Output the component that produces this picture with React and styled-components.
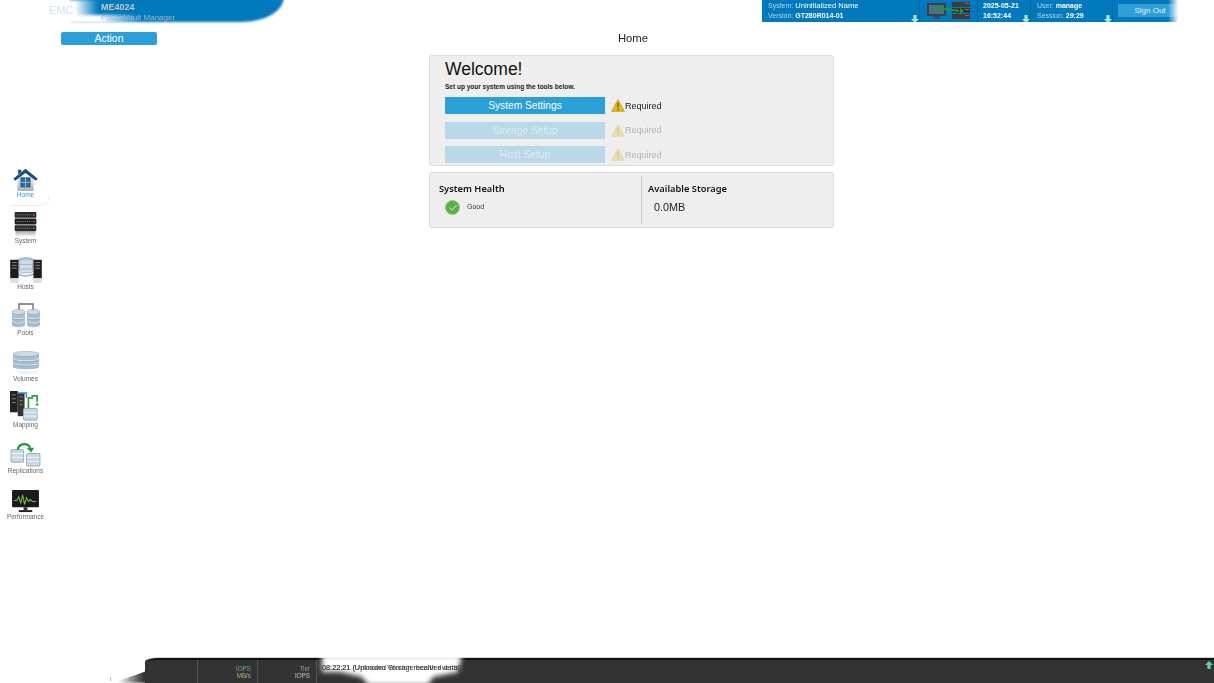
import React from "react";
import styled, { createGlobalStyle } from "styled-components";
import { Check } from "lucide-react";

const GlobalStyle = createGlobalStyle`
    html, body {
        margin: 0;
        padding: 0;
        height: 100%;
        background: #ffffff;
        font-family: "Liberation Sans", Arial, sans-serif;
        overflow: hidden;
    }
    #root {
        height: 100%;
    }
`;

const HomeIcon = () => (
    <svg width="25" height="23" viewBox="0 0 30 28">
        <defs>
            <linearGradient id="wallFade" x1="0" y1="0" x2="0" y2="1">
                <stop offset="0" stopColor="#eef0f2" />
                <stop offset="1" stopColor="#aab2b8" />
            </linearGradient>
        </defs>
        <path d="M5 11h20v17H5z" fill="url(#wallFade)" />
        <path d="M0 13L15 1l15 12-2.500 2.500L15 6 2.500 15.500z" fill="#17537f" />
        <path d="M6 2h4v3L6 8z" fill="#17537f" />
        <rect x="9.500" y="12" width="11" height="11" fill="#2f6f9f" stroke="#16476b" />
        <path d="M15 12v11M9.500 17.500h11" stroke="#a9cbe3" />
    </svg>
);

const SystemIcon = () => (
    <svg width="25" height="26" viewBox="0 0 30 31">
        <defs>
            <linearGradient id="serverFade" x1="0" y1="0" x2="0" y2="1">
                <stop offset="0" stopColor="#8c8c8c" />
                <stop offset="1" stopColor="#ffffff" />
            </linearGradient>
        </defs>
        <rect x="3" y="22" width="24" height="9" fill="url(#serverFade)" />
        <rect x="2" y="1" width="26" height="7" rx="1" fill="#2a2a2a" />
        <rect x="2" y="9" width="26" height="7" rx="1" fill="#1f1f1f" />
        <rect x="2" y="17" width="26" height="7" rx="1" fill="#2a2a2a" />
        <path d="M4 4.500h18M4 12.500h18M4 20.500h18" stroke="#8b8b8b" strokeDasharray="1.5 1" />
        <path d="M24 3.500h2v2h-2zM24 11.500h2v2h-2zM24 19.500h2v2h-2z" fill="#c7414f" />
    </svg>
);

const HostsIcon = () => (
    <svg width="32" height="26" viewBox="0 0 34 28">
        <path d="M7 4c6-4 14-4 20 0" fill="none" stroke="#a7b8d4" strokeWidth="2" />
        <path d="M8 18c5 3 13 3 18 0" fill="none" stroke="#a7b8d4" strokeWidth="2" />
        <rect x="10" y="3" width="14" height="14" rx="2" fill="#cfdde9" stroke="#9fb3c6" />
        <path d="M10 8h14M10 13h14" stroke="#9fb3c6" />
        <rect x="0" y="3" width="9" height="20" fill="#1d1d1d" />
        <rect x="25" y="3" width="9" height="20" fill="#1d1d1d" />
        <path d="M2 6h5M2 9h5M2 12h5M27 6h5M27 9h5M27 12h5" stroke="#8a8a8a" />
        <path d="M0 23h9v5H0zM25 23h9v5h-9z" fill="#dedede" />
    </svg>
);

const Disk = ({ x, y, w }) => (
    <>
        <path d={`M${x} ${y}v13c0 3 ${w} 3 ${w} 0v-13z`} fill="#a9bfd0" />
        <ellipse cx={x + w / 2} cy={y} rx={w / 2} ry="2.6" fill="#cddbe6" stroke="#8ea7ba" strokeWidth=".6" />
        <path d={`M${x} ${y + 4.5}c0 3 ${w} 3 ${w} 0M${x} ${y + 9}c0 3 ${w} 3 ${w} 0`} fill="none" stroke="#e6eef4" />
        <path d={`M${x} ${y + 5.4}c0 3 ${w} 3 ${w} 0M${x} ${y + 9.9}c0 3 ${w} 3 ${w} 0`} fill="none" stroke="#7f9db3" strokeWidth=".6" />
    </>
);

const PoolsIcon = () => (
    <svg width="30" height="26" viewBox="0 0 30 26">
        <path d="M8 8V1h14v7" fill="none" stroke="#6d6d6d" strokeWidth="1.4" />
        <Disk x={1} y={9} w={13} />
        <Disk x={16} y={9} w={13} />
    </svg>
);

const VolumesIcon = () => (
    <svg width="28" height="24" viewBox="0 0 28 24">
        <Disk x={1} y={3} w={26} />
        <path d="M3 18c5 3 19 3 24 0l-3 5H8z" fill="#eef2f5" />
    </svg>
);

const MappingIcon = () => (
    <svg width="31" height="30" viewBox="0 0 32 31">
        <rect x="0" y="0" width="8" height="22" fill="#222" />
        <rect x="8" y="2" width="7" height="24" fill="#333" />
        <path d="M2 4h4M2 8h4M2 12h4M10 6h3M10 10h3M10 14h3" stroke="#888" />
        <path d="M8 2h9v5" fill="none" stroke="#3f86d9" strokeWidth="1.5" />
        <path d="M19 18V7h4V5h5v6" fill="none" stroke="#2fa33b" strokeWidth="1.8" />
        <path d="M26 15h4l-2-3z" fill="#2fa33b" />
        <rect x="14" y="18" width="14" height="12" rx="1" fill="#c6d7e4" stroke="#92a9bc" />
        <path d="M14 22h14M14 26h14" stroke="#eef4f8" />
    </svg>
);

const ReplicationsIcon = () => (
    <svg width="31" height="24" viewBox="0 0 32 25">
        <rect x="1" y="7" width="13" height="13" rx="1" fill="#c9d8e4" stroke="#93a9ba" />
        <path d="M1 11h13M1 15h13" stroke="#eef4f8" />
        <rect x="17" y="11" width="14" height="13" rx="1" fill="#c9d8e4" stroke="#93a9ba" />
        <path d="M17 15h14M17 19h14" stroke="#eef4f8" />
        <path d="M8 7C9 0 18-1 21 5" fill="none" stroke="#249a3c" strokeWidth="2.4" />
        <path d="M17 5h8l-3 5z" fill="#249a3c" />
    </svg>
);

const PerformanceIcon = () => (
    <svg width="29" height="24" viewBox="0 0 30 25">
        <rect x="1" y="1" width="28" height="18" rx="1" fill="#1b1b1b" />
        <path d="M3 12h3l2-4 2 7 2-9 2 10 2-7 2 4 2-2 2 2h4" fill="none" stroke="#79b94a" strokeWidth="1.1" />
        <rect x="13" y="19" width="4" height="3" fill="#333" />
        <rect x="8" y="22" width="14" height="2" fill="#222" />
    </svg>
);

const WarningIcon = ({ faded }) => (
    <WarningSvg $faded={faded} width="14" height="13" viewBox="0 0 14 13">
        <path d="M7 .6L13.600 12.400H.4z" fill="#e3bb18" stroke="#b8940f" strokeWidth=".6" strokeLinejoin="round" />
        <path d="M6.400 4h1.200l-.2 5H6.600zM6.400 10h1.200v1.200H6.400z" fill="#4a3c05" />
    </WarningSvg>
);

const DataHostIcon = () => (
    <svg width="44" height="20" viewBox="0 0 44 20">
        <rect x="0" y="2" width="19" height="13" fill="#38424a" />
        <rect x="2" y="4" width="15" height="9" fill="#4e6f84" />
        <rect x="6" y="15" width="7" height="3" fill="#29536f" />
        <rect x="25" y="1" width="18" height="5" fill="#3c3c3c" />
        <rect x="25" y="7" width="18" height="5" fill="#333" />
        <rect x="25" y="13" width="18" height="5" fill="#3c3c3c" />
        <path d="M38 2.500h4M38 8.500h4M38 14.500h4" stroke="#d34a4a" />
        <path d="M12 7l20 3" stroke="#1c9a3a" strokeWidth="1.8" />
        <path d="M12 4v6l-4-3zM33 7v6l4-3z" fill="#1c9a3a" />
    </svg>
);

const BlockArrow = ({ up }) => (
    <svg width="8" height="8" viewBox="0 0 8 8">
        <path d={up ? "M4 0l4 4H5.600v4H2.400V4H0z" : "M4 8L0 4h2.400V0h3.200v4H8z"} fill={up ? "#5fd0b4" : "#a8e6d2"} />
    </svg>
);

const navItems = [
    { label: "Home", icon: <HomeIcon />, active: true },
    { label: "System", icon: <SystemIcon /> },
    { label: "Hosts", icon: <HostsIcon /> },
    { label: "Pools", icon: <PoolsIcon /> },
    { label: "Volumes", icon: <VolumesIcon /> },
    { label: "Mapping", icon: <MappingIcon /> },
    { label: "Replications", icon: <ReplicationsIcon /> },
    { label: "Performance", icon: <PerformanceIcon /> },
];

const setupSteps = [
    { label: "System Settings" },
    { label: "Storage Setup", disabled: true },
    { label: "Host Setup", disabled: true },
];

export default function App() {
    return (
        <>
            <GlobalStyle />
            <Page>
                <Header>
                    <Brand>
                        <BrandFade>EMC</BrandFade>
                        <BrandText>
                            <strong>ME4024</strong>
                            <span>PowerVault Manager</span>
                        </BrandText>
                    </Brand>
                    <Status>
                        <StatusCell $width={158}>
                            <p><Label>System:</Label> <Value $large>Uninitialized Name</Value></p>
                            <p><Label>Version:</Label> <Value>GT280R014-01</Value></p>
                            <Drop><BlockArrow /></Drop>
                        </StatusCell>
                        <StatusIcon><DataHostIcon /></StatusIcon>
                        <StatusCell $width={53} $pad={5}>
                            <p><Value>2025-05-21</Value></p>
                            <p><Value>16:52:44</Value></p>
                            <Drop><BlockArrow /></Drop>
                        </StatusCell>
                        <StatusCell $width={82}>
                            <p><Label>User:</Label> <Value>manage</Value></p>
                            <p><Label>Session:</Label> <Value>29:29</Value></p>
                            <Drop><BlockArrow /></Drop>
                        </StatusCell>
                        <SignOut>Sign Out</SignOut>
                    </Status>
                </Header>
                <Main>
                    <Sidebar>
                        {navItems.map((item) => (
                            <NavItem key={item.label} $active={item.active}>
                                <NavIcon>{item.icon}</NavIcon>
                                <NavLabel $active={item.active}>{item.label}</NavLabel>
                            </NavItem>
                        ))}
                    </Sidebar>
                    <Content>
                        <TopRow>
                            <ActionButton>Action</ActionButton>
                            <Title>Home</Title>
                        </TopRow>
                        <Card>
                            <Welcome>Welcome!</Welcome>
                            <Intro>Set up your system using the tools below.</Intro>
                            <Steps>
                                {setupSteps.map((step) => (
                                    <Step key={step.label}>
                                        <StepButton $disabled={step.disabled}>{step.label}</StepButton>
                                        <WarningIcon faded={step.disabled} />
                                        <Required $disabled={step.disabled}>Required</Required>
                                    </Step>
                                ))}
                            </Steps>
                        </Card>
                        <SummaryCard>
                            <Health>
                                <SummaryTitle>System Health</SummaryTitle>
                                <HealthRow>
                                    <GoodBadge><Check size={10} color="#ffffff" strokeWidth={2} /></GoodBadge>
                                    <GoodText>Good</GoodText>
                                </HealthRow>
                            </Health>
                            <StorageCell>
                                <SummaryTitle>Available Storage</SummaryTitle>
                                <StorageValue>0.0MB</StorageValue>
                            </StorageCell>
                        </SummaryCard>
                    </Content>
                </Main>
                <Footer>
                    <FooterTicks>I&nbsp;&nbsp;&nbsp;&nbsp;&nbsp;&nbsp;&nbsp;&nbsp;&nbsp;&nbsp;&nbsp;b</FooterTicks>
                    <FooterBar>
                        <FooterCell $width={53} />
                        <FooterCell $width={60}>
                            <Metric $color="#6fa3a8">IOPS</Metric>
                            <Metric $color="#a9b86f">MB/s</Metric>
                        </FooterCell>
                        <FooterCell $width={59}>
                            <Metric $color="#9a9a9a">Tier</Metric>
                            <Metric $color="#c9c9c9">IOPS</Metric>
                        </FooterCell>
                        <Notch />
                        <EventText>
                            <span>08:22:21 (Uploaded Storage health events)</span>
                            <span>08:22:21 (Unknown Version received data)</span>
                        </EventText>
                        <UpArrow><BlockArrow up /></UpArrow>
                    </FooterBar>
                </Footer>
            </Page>
        </>
    );
}

const Page = styled.div`
    height: 683px;
    display: flex;
    flex-direction: column;
    overflow: hidden;
    filter: blur(0.3px);
`;

const Header = styled.header`
    height: 22px;
    flex: none;
    display: flex;
    justify-content: space-between;
    padding-right: 27px;
`;

const Brand = styled.div`
    position: relative;
    width: 244px;
    margin-left: 40px;
    padding-left: 61px;
    box-sizing: border-box;

    &::before {
        content: "";
        position: absolute;
        top: -4px;
        bottom: 0;
        left: 30px;
        right: 0;
        background: #0279bd;
        border-bottom-right-radius: 42px 25px;
        filter: blur(0.8px);
    }

    &::after {
        content: "";
        position: absolute;
        top: 0;
        left: 0;
        width: 100px;
        height: 23px;
        background:
            linear-gradient(90deg, #fff 35px, rgba(255, 255, 255, 0) 58px),
            linear-gradient(90deg, #fff 62%, rgba(255, 255, 255, 0)) bottom / 100% 8px no-repeat;
        filter: blur(1.5px);
    }
`;

const BrandFade = styled.span`
    position: absolute;
    z-index: 1;
    left: 9px;
    top: 4px;
    font-size: 11px;
    color: #cfe2ec;
`;

const BrandText = styled.div`
    position: relative;
    z-index: 1;
    display: flex;
    flex-direction: column;
    padding-top: 2px;

    strong {
        font-size: 9px;
        line-height: 11px;
        color: #c8c8c8;
    }

    span {
        font-size: 8px;
        line-height: 10px;
        color: #a0b8c6;
        white-space: nowrap;
    }
`;

const Status = styled.div`
    position: relative;
    width: 425px;
    display: flex;
    background: #0279bd;
    overflow: hidden;

    &::after {
        content: "";
        position: absolute;
        top: -2px;
        right: 0;
        width: 19px;
        height: 26px;
        background: linear-gradient(90deg, rgba(255, 255, 255, 0), #fff 55%);
    }
`;

const StatusCell = styled.div`
    position: relative;
    width: ${(props) => props.$width}px;
    box-sizing: border-box;
    padding: 1px 0 0 ${(props) => props.$pad || 6}px;
    border-right: 1px solid #05659c;

    p {
        margin: 0;
        font-size: 7px;
        line-height: 10px;
        white-space: nowrap;
    }
`;

const Label = styled.span`
    color: #b4d4e8;
`;

const Value = styled.span`
    color: #ffffff;
    font-weight: ${(props) => (props.$large ? 400 : 700)};
    font-size: ${(props) => (props.$large ? "7.6px" : "7px")};
`;

const Drop = styled.span`
    position: absolute;
    right: 0;
    bottom: -1px;
    line-height: 0;
`;

const StatusIcon = styled.div`
    width: 58px;
    display: flex;
    justify-content: center;
    align-items: flex-start;
    box-sizing: border-box;
    padding-top: 1px;
    border-right: 1px solid #05659c;
`;

const SignOut = styled.div`
    width: 64px;
    height: 13px;
    margin: 4px 0 0 5px;
    background: #2f9fd8;
    color: #e6f2f8;
    font-size: 8px;
    line-height: 13px;
    text-align: center;
`;

const Main = styled.main`
    flex: 1;
    display: flex;
`;

const Sidebar = styled.nav`
    width: 51px;
    flex: none;
    padding-top: 133px;
`;

const NavItem = styled.div`
    position: relative;
    height: 46px;
    display: flex;
    flex-direction: column;
    align-items: center;

    &::after {
        content: "";
        display: ${(props) => (props.$active ? "block" : "none")};
        position: absolute;
        left: 10px;
        top: 41px;
        width: 38px;
        height: 9px;
        border-bottom: 1px solid #ececec;
        border-right: 1px solid #f0f0f0;
        border-bottom-right-radius: 12px 6px;
    }
`;

const NavIcon = styled.div`
    height: 36px;
    display: flex;
    align-items: flex-end;
    justify-content: center;
`;

const NavLabel = styled.span`
    font-size: 6.5px;
    line-height: 8px;
    color: ${(props) => (props.$active ? "#2f9fd8" : "#666666")};
    white-space: nowrap;
`;

const Content = styled.section`
    flex: 1;
    padding: 10px 12px 0 10px;
`;

const TopRow = styled.div`
    position: relative;
    height: 23px;
    display: flex;
    justify-content: center;
`;

const ActionButton = styled.button`
    position: absolute;
    left: 0;
    top: 0;
    width: 96px;
    height: 13px;
    padding: 0;
    border: none;
    border-radius: 2px;
    background: #2a9fd8;
    color: #ffffff;
    font-family: inherit;
    font-size: 10.4px;
`;

const Title = styled.h1`
    margin: 0 0 0 3px;
    font-size: 11.3px;
    line-height: 13px;
    font-weight: 400;
    color: #222222;
`;

const Card = styled.div`
    width: 405px;
    height: 111px;
    box-sizing: border-box;
    margin: 0 auto;
    padding: 3px 0 0 15px;
    background: #eeeeee;
    border: 1px solid #dcdcdc;
    border-radius: 3px;
`;

const Welcome = styled.h2`
    margin: 0;
    font-size: 17.5px;
    line-height: 20px;
    font-weight: 400;
    color: #111111;
`;

const Intro = styled.p`
    margin: 4px 0 0;
    font-size: 6.5px;
    line-height: 8px;
    font-weight: 700;
    color: #222222;
`;

const Steps = styled.div`
    margin-top: 6px;
    display: flex;
    flex-direction: column;
    gap: 7.5px;
`;

const Step = styled.div`
    display: flex;
    align-items: center;
    height: 17px;
`;

const StepButton = styled.div`
    width: 160px;
    height: 17px;
    margin-right: 6px;
    background: ${(props) => (props.$disabled ? "#b9d9e8" : "#2a9fd8")};
    color: ${(props) => (props.$disabled ? "#dcecf3" : "#ffffff")};
    font-size: 10.2px;
    line-height: 17px;
    text-align: center;
`;

const WarningSvg = styled.svg`
    flex: none;
    opacity: ${(props) => (props.$faded ? 0.3 : 1)};
`;

const Required = styled.span`
    font-size: 9px;
    color: ${(props) => (props.$disabled ? "#b4b4b4" : "#222222")};
`;

const SummaryCard = styled.div`
    width: 405px;
    height: 56px;
    box-sizing: border-box;
    margin: 6px auto 0;
    padding: 3px 0;
    display: flex;
    background: #eeeeee;
    border: 1px solid #dcdcdc;
    border-radius: 3px;
`;

const Health = styled.div`
    width: 212px;
    box-sizing: border-box;
    padding: 6px 0 0 9px;
    border-right: 1px solid #c9c9c9;
`;

const SummaryTitle = styled.h3`
    margin: 0;
    font-family: "Noto Sans", sans-serif;
    font-size: 9.3px;
    line-height: 13px;
    font-weight: 600;
    color: #111111;
`;

const HealthRow = styled.div`
    display: flex;
    align-items: flex-start;
    margin: 5px 0 0 6px;
`;

const GoodBadge = styled.span`
    width: 15px;
    height: 15px;
    border-radius: 50%;
    background: #5bb04a;
    border: 1px solid #8ccb7f;
    box-sizing: border-box;
    display: flex;
    align-items: center;
    justify-content: center;
`;

const GoodText = styled.span`
    margin: 1px 0 0 7px;
    font-size: 7px;
    line-height: 11px;
    color: #333333;
`;

const StorageCell = styled.div`
    padding: 6px 0 0 6px;
`;

const StorageValue = styled.div`
    margin: 5px 0 0 6px;
    font-size: 10.8px;
    line-height: 14px;
    color: #222222;
`;

const Footer = styled.footer`
    position: relative;
    height: 25px;
    flex: none;
    display: flex;
    padding-left: 145px;

    &::before {
        content: "";
        position: absolute;
        left: 118px;
        bottom: 0;
        width: 34px;
        height: 14px;
        background: linear-gradient(90deg, rgba(51, 51, 51, 0), #333333 75%);
        clip-path: polygon(100% 0, 100% 100%, 0 100%, 0 85%, 50% 45%);
        filter: blur(1px);
    }
`;

const FooterTicks = styled.span`
    position: absolute;
    z-index: 1;
    left: 110px;
    bottom: 0;
    font-size: 6px;
    line-height: 7px;
    color: #8a8a8a;
`;

const FooterBar = styled.div`
    position: relative;
    flex: 1;
    display: flex;
    background: #333333;
    border-top: 2px solid #111111;
    box-shadow: 0 -1px 0 #d4d4d4;
    border-top-left-radius: 14px 4px;
`;

const FooterCell = styled.div`
    width: ${(props) => props.$width}px;
    box-sizing: border-box;
    padding: 5px 6px 0 0;
    border-right: 1px solid #555555;
    display: flex;
    flex-direction: column;
    align-items: flex-end;
`;

const Metric = styled.span`
    font-size: 6.3px;
    line-height: 7px;
    color: ${(props) => props.$color};
`;

const Notch = styled.div`
    position: absolute;
    left: 170px;
    top: -5px;
    width: 155px;
    height: 30px;
    filter: blur(2.5px);

    &::before {
        content: "";
        position: absolute;
        inset: 0;
        background: #ffffff;
        clip-path: polygon(7px 0, 147px 0, 143px 17px, 118px 22px, 113px 30px, 53px 30px, 47px 22px, 25px 17px, 7px 17px);
    }
`;

const EventText = styled.div`
    position: relative;
    margin-left: 5px;
    width: 145px;
    height: 10px;
    margin-top: 3px;

    span {
        position: absolute;
        left: 0;
        top: 0;
        font-size: 7.3px;
        line-height: 10px;
        color: #444444;
        white-space: nowrap;
    }
`;

const UpArrow = styled.span`
    position: absolute;
    right: 1px;
    top: 1px;
    line-height: 0;
`;
